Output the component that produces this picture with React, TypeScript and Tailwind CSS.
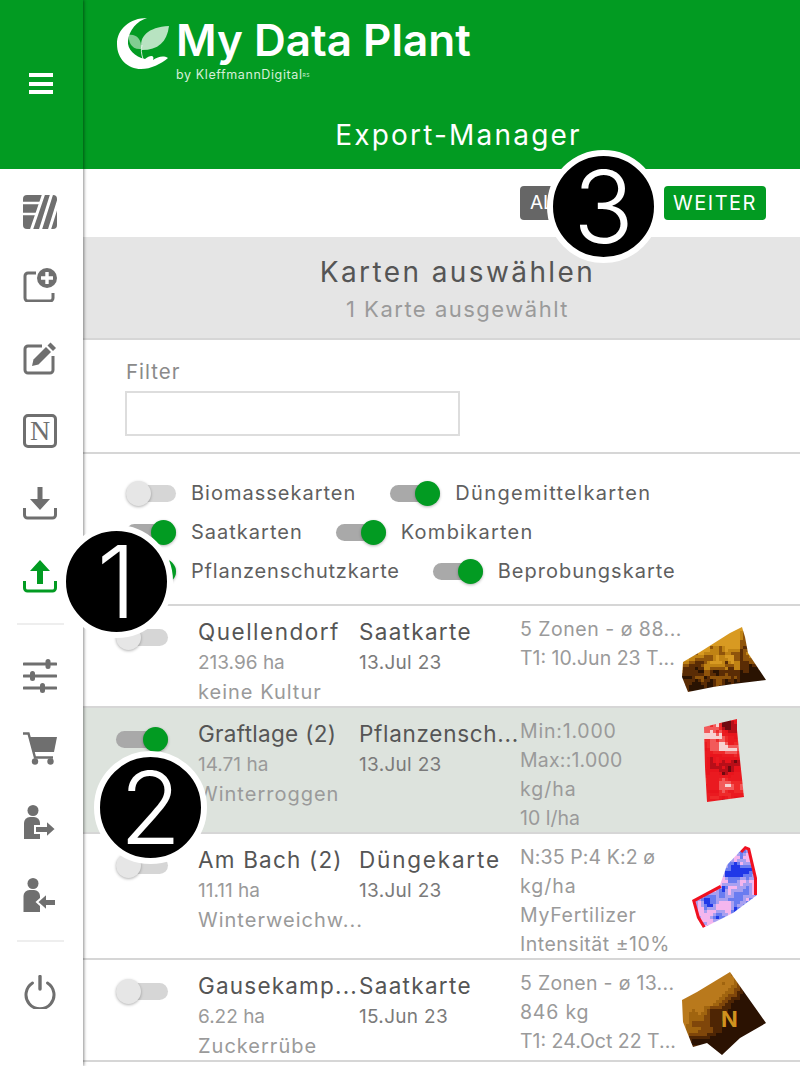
import React from "react";

const G = "#6f6f6f";

function noise(seed: number) {
  const h = (x: number, y: number) => {
    const s = Math.sin(x * 127.1 + y * 311.7 + seed * 74.7) * 43758.5453;
    return s - Math.floor(s);
  };
  const sm = (t: number) => t * t * (3 - 2 * t);
  return (x: number, y: number) => {
    const xi = Math.floor(x), yi = Math.floor(y);
    const u = sm(x - xi), v = sm(y - yi);
    const a = h(xi, yi), b = h(xi + 1, yi), c = h(xi, yi + 1), d = h(xi + 1, yi + 1);
    return a + (b - a) * u + (c - a) * v + (a - b - c + d) * u * v;
  };
}

type MapProps = {
  id: string;
  poly: string;
  seed: number;
  palette: string[];
  field: (x: number, y: number, n: (x: number, y: number) => number) => number;
  rim?: string[];
  children?: React.ReactNode;
};

function FieldMap({ id, poly, seed, palette, field, rim, children }: MapProps) {
  const n = noise(seed);
  const cells: React.ReactNode[] = [];
  for (let y = 0; y < 86; y += 3) {
    for (let x = 0; x < 86; x += 3) {
      const v = Math.max(0, Math.min(0.999, field(x, y, n)));
      cells.push(<rect key={x + "-" + y} x={x} y={y} width={3} height={3} shapeRendering="crispEdges" fill={palette[Math.floor(v * palette.length)]} />);
    }
  }
  return (
    <svg width="86" height="86" viewBox="0 0 86 86" className="shrink-0 mt-[10px]">
      <clipPath id={id}><polygon points={poly} /></clipPath>
      <g clipPath={`url(#${id})`}>
        <g className="blur-[0.5px]">
          {cells}
          {rim && rim.map((r) => <polyline key={r} points={r} fill="none" stroke="#f01020" strokeWidth="6" />)}
        </g>
      </g>
      {children}
    </svg>
  );
}

const Map1 = () => (
  <FieldMap id="m1" seed={3} poly="3,46 20,36 50,17 62,11 65,21 68,37 86,64 53,68 33,71 8,76 2,61"
    palette={["#d89a22", "#c08314", "#8f540b", "#5a2c05", "#2a1302"]}
    field={(x, y, n) => (y - 25) / 48 + (n(x / 5, y / 5) - 0.5) * 0.7 + (x > 58 ? 0.35 : 0)} />
);
const Map2 = () => (
  <FieldMap id="m2" seed={8} poly="24,9 40,5 57,1 57,12 60,42 64,79 27,84 25,49"
    palette={["#f7d2d2", "#f25a5a", "#ee2a2a", "#ea1a20", "#e8141c", "#b80e18", "#6e0a10"]}
    field={(x, y, n) => 0.52 + 0.28 * Math.sin(y / 6.5 + 0.6) * (x > 38 ? 1.1 : 0.5) + (n(x / 6, y / 6) - 0.5) * 0.45 - (y < 20 && x < 40 ? 0.45 : 0)} />
);
const Map3 = () => (
  <FieldMap id="m3" seed={5} poly="12,56 40,41 47,21 65,2 70,4 77,34 77,51 53,69 23,84 17,74"
    rim={["23,84 17,74 12,56 40,41", "60,7 65,2 70,4 77,34 77,51"]}
    palette={["#f4b6ee", "#f4b6ee", "#a8a0f0", "#6a7cf0", "#2038e8"]}
    field={(x, y, n) => 0.5 + (n(x / 6, y / 6) - 0.5) * 0.95 + (x > 42 && x < 58 && y > 15 && y < 32 ? 0.3 : 0)} />
);
const Map4 = () => (
  <FieldMap id="m4" seed={11} poly="2,30 17,22 50,2 57,12 86,53 60,68 42,85 27,73 13,77 3,52"
    palette={["#b9791c", "#a0640f", "#7f460a", "#4e2504", "#2b1202"]}
    field={(x, y, n) => (x + y - 48) / 55 + (n(x / 10, y / 10) - 0.5) * 0.5}>
    <text x="41" y="57" fill="#d0921f" fontFamily="Inter, sans-serif" fontWeight="700" fontSize="22">N</text>
  </FieldMap>
);

const Tray = ({ color }: { color: string }) => (
  <path d="M1.5 21V28a3 3 0 0 0 3 3H29.5a3 3 0 0 0 3-3V21" fill="none" stroke={color} strokeWidth="3" />
);

const icons: React.ReactNode[] = [
  <svg key="a" width="34" height="34" viewBox="0 0 34 34">
    <clipPath id="fr"><rect width="34" height="34" rx="4" /></clipPath>
    <g clipPath="url(#fr)">
      <rect width="34" height="34" fill={G} />
      <path d="M0 8H18M0 19H14" stroke="#fff" strokeWidth="2.4" />
      <path d="M21 -2L8 36M29 -2L17 36M36 4L26 36" stroke="#fff" strokeWidth="3" />
    </g>
  </svg>,
  <svg key="b" width="34" height="34" viewBox="0 0 34 34">
    <path d="M13 5H5a3 3 0 0 0-3 3V30a3 3 0 0 0 3 3H27a3 3 0 0 0 3-3V25" fill="none" stroke={G} strokeWidth="3" />
    <circle cx="24" cy="10" r="10" fill={G} />
    <path d="M24 4V16M18 10H30" stroke="#fff" strokeWidth="3.4" />
  </svg>,
  <svg key="c" width="34" height="34" viewBox="0 0 34 34">
    <path d="M19 5H5a3 3 0 0 0-3 3V29a3 3 0 0 0 3 3H27a3 3 0 0 0 3-3V15" fill="none" stroke={G} strokeWidth="3" />
    <path d="M9 25L10.5 18.5L23 6L28 11L15.5 23.5Z" fill={G} />
    <path d="M24.5 4.5L27.5 1.5L33 7L30 10Z" fill={G} />
  </svg>,
  <svg key="d" width="34" height="34" viewBox="0 0 34 34">
    <rect x="1.5" y="1.5" width="31" height="31" rx="3.5" fill="none" stroke={G} strokeWidth="3" />
    <text x="17" y="26" textAnchor="middle" fill={G} fontFamily="Liberation Serif, serif" fontWeight="400" fontSize="28">N</text>
  </svg>,
  <svg key="e" width="34" height="34" viewBox="0 0 34 34">
    <path d="M14.5 0H19.5V12H27L17 23L7 12H14.5Z" fill={G} />
    <Tray color={G} />
  </svg>,
  <svg key="f" width="34" height="34" viewBox="0 0 34 34">
    <path d="M17 0L27 11H20V24H14V11H7Z" fill="#029b22" />
    <Tray color="#029b22" />
  </svg>,
];

const icons2: React.ReactNode[] = [
  <svg key="g" width="34" height="34" viewBox="0 0 34 34">
    <path d="M1 5H33M1 17H33M1 29H33" stroke={G} strokeWidth="3" strokeLinecap="round" />
    <rect x="22.5" y="0" width="5" height="10" rx="2.5" fill={G} />
    <rect x="7" y="12" width="5" height="10" rx="2.5" fill={G} />
    <rect x="17" y="24" width="5" height="10" rx="2.5" fill={G} />
  </svg>,
  <svg key="h" width="34" height="34" viewBox="0 0 34 34">
    <path d="M0 1.5H5.5L12 25.5H30" fill="none" stroke={G} strokeWidth="2.4" />
    <path d="M6 5H34L31 20H10Z" fill={G} />
    <circle cx="12" cy="29.5" r="3.2" fill={G} />
    <circle cx="27.5" cy="29.5" r="3.2" fill={G} />
  </svg>,
  <svg key="i" width="34" height="34" viewBox="0 0 34 34">
    <circle cx="10" cy="5.5" r="5.5" fill={G} />
    <path d="M1 34V18a6 6 0 0 1 6-6H11a6 6 0 0 1 6 6V34Z" fill={G} />
    <path d="M12 21H23V15L33 24L23 33V28H12Z" fill={G} stroke="#fff" strokeWidth="2" />
  </svg>,
  <svg key="j" width="34" height="34" viewBox="0 0 34 34">
    <circle cx="10" cy="5.5" r="5.5" fill={G} />
    <path d="M0.5 34V18a6 6 0 0 1 6-6H11a6 6 0 0 1 6 6V34Z" fill={G} />
    <path d="M33 21H24V15L14 24L24 33V28H33Z" fill={G} stroke="#fff" strokeWidth="2" />
  </svg>,
];

const NavItem = ({ children }: { children: React.ReactNode }) => (
  <div className="h-[73px] pr-[3px] flex items-center justify-center">{children}</div>
);

function Toggle({ on, row }: { on?: boolean; row?: boolean }) {
  return (
    <div className={`relative ${row ? "w-[52px]" : "w-[50px]"} h-[17px] rounded-full shrink-0 ${on ? "bg-[#a9a9a9]" : "bg-[#d6d6d6]"}`}>
      <div className={`absolute top-[-4px] w-[25px] h-[25px] rounded-full shadow-[0_1px_3px_rgba(0,0,0,0.3)] ${on ? "right-0 bg-[#029b22]" : "left-0 bg-[#e6e6e6]"}`} />
    </div>
  );
}

const Chip = ({ on, label, tr }: { on?: boolean; label: string; tr: string }) => (
  <div className="flex items-center gap-[15px]">
    <Toggle on={on} />
    <span className={`text-[#5f5f5f] text-[20px] leading-[24px] whitespace-nowrap ${tr}`}>{label}</span>
  </div>
);

const NAME = "text-[22.5px] leading-[30px] text-[#555555]";
const SUB = "text-[20px] tracking-[1px] leading-[30px] text-[#9a9a9a]";
const NUM = "text-[19px] leading-[30px] text-[#9a9a9a] mt-[1px]";
const DET = "text-[19.5px] leading-[29px] text-[#9a9a9a]";

type RowP = {
  name: React.ReactNode; kind: React.ReactNode; a: string; date: string; b: React.ReactNode;
  details: React.ReactNode; on?: boolean; sel?: boolean; tall?: boolean; map: React.ReactNode;
};

const Row = ({ name, kind, a, date, b, details, on, sel, tall, map }: RowP) => (
  <div className={`flex border-b-2 border-[#d6d6d6] pl-[33px] shrink-0 ${tall ? "h-[126px]" : "h-[102px]"} ${sel ? "bg-[#dde3dd]" : "bg-white"}`}>
    <div className="w-[82px] shrink-0 pt-[23px]"><Toggle row on={on} /></div>
    <div className="w-[161px] shrink-0 pt-[11px] whitespace-nowrap">
      {name}
      <div className={NUM}>{a}</div>
      <div className="h-[28px] flex items-center">{b}</div>
    </div>
    <div className="w-[161px] shrink-0 pt-[11px] whitespace-nowrap">
      {kind}
      <div className="text-[19px] tracking-[0.3px] leading-[30px] text-[#7a7a7a] mt-[1px]">{date}</div>
    </div>
    <div className="w-[160px] shrink-0 pt-[9px] whitespace-nowrap">{details}</div>
    {map}
  </div>
);

const Badge = ({ n, className }: { n: string; className: string }) => (
  <div className={`absolute w-[113px] h-[113px] rounded-full bg-black border-[6px] border-white flex items-center justify-center text-white text-[100px] leading-none font-[350] z-20 ${className}`}>
    {n}
  </div>
);

export default function App() {
  return (
    <div className="relative flex w-[800px] h-[1066px] overflow-hidden bg-white font-[Inter,sans-serif]">
      <aside className="relative z-10 w-[83px] shrink-0 flex flex-col bg-white shadow-[1px_0_3px_rgba(0,0,0,0.45)]">
        <div className="h-[169px] bg-[#029b22] pr-[2px] pb-[2px] flex flex-col items-center justify-center gap-[4.5px]">
          <div className="w-[24px] h-[4px] bg-white" />
          <div className="w-[24px] h-[4px] bg-white" />
          <div className="w-[24px] h-[4px] bg-white" />
        </div>
        <div className="pt-[6px]">
          {icons.map((ic, i) => <NavItem key={i}>{ic}</NavItem>)}
          <div className="h-[2px] ml-[17px] mr-[19px] bg-[#eeeeee] mt-[10px] mb-[14px]" />
          {icons2.map((ic, i) => <NavItem key={i}>{ic}</NavItem>)}
          <div className="h-[2px] ml-[17px] mr-[19px] bg-[#eeeeee] mt-[9px] mb-[13px]" />
          <NavItem>
            <svg width="34" height="34" viewBox="0 0 34 34">
              <path d="M9.5 8A14 14 0 1 0 24.5 8" fill="none" stroke={G} strokeWidth="3" strokeLinecap="round" />
              <path d="M17 1.5V14" stroke={G} strokeWidth="3.4" strokeLinecap="round" />
            </svg>
          </NavItem>
        </div>
      </aside>

      <main className="flex-1 min-w-0 flex flex-col">
        <header className="h-[169px] bg-[#029b22] pl-[34px] text-white shrink-0">
          <div className="flex pt-[17px] h-[118px]">
            <svg width="54" height="54" viewBox="0 0 54 54" className="shrink-0">
              <path d="M30 1C13 1 0 12 0 27C0 42 11 52 24 52C34 52 44 47 51 41C46 38 41 40 36 43C38 38 33 38 28 42C18 40 10 32 11 24C12 13 20 4 30 1Z" fill="#fff" />
              <path d="M25 33C21 20 31 10 52 9C50 25 41 33 25 33Z" fill="#fff" fillOpacity="0.72" />
              <path d="M24 32C14 33 11 24 12 18C19 17 25 22 24 32Z" fill="#fff" fillOpacity="0.5" />
              <path d="M26 42C24 36 24 32 25 28" stroke="#fff" strokeOpacity="0.8" fill="none" />
            </svg>
            <div className="pl-[5px]">
              <div className="text-[44px] font-semibold leading-[46px] whitespace-nowrap">My Data Plant</div>
              <div className="text-[12.5px] leading-[16px] text-[#d6efd9] tracking-[0.6px] mt-[4px] whitespace-nowrap">
                by KleffmannDigital<sup className="text-[5px]">RS</sup>
              </div>
            </div>
          </div>
          <div className="text-center text-[28px] tracking-[2.2px] leading-[34px]">Export-Manager</div>
        </header>

        <div className="h-[68px] flex items-center justify-end pr-[34px] gap-[10px] shrink-0">
          <div className="w-[134px] h-[34px] rounded-[4px] bg-[#666666] text-white text-[19px] pl-[10px] leading-[34px]">ALLE</div>
          <div className="w-[102px] h-[34px] rounded-[4px] bg-[#029b22] text-white text-[20px] tracking-[1.5px] text-center leading-[34px]">WEITER</div>
        </div>

        <div className="h-[103px] bg-[#e5e5e5] border-b-2 border-[#d6d6d6] pl-[32px] text-center shrink-0">
          <div className="pt-[19px] text-[28px] tracking-[2.4px] leading-[32px] text-[#555555]">Karten auswählen</div>
          <div className="pt-[7px] text-[22px] tracking-[1.5px] leading-[28px] text-[#9a9a9a]">1 Karte ausgewählt</div>
        </div>

        <div className="h-[114px] border-b-2 border-[#d6d6d6] pl-[42px] shrink-0">
          <div className="pl-[1px] pt-[19px] text-[20.5px] tracking-[1px] leading-[26px] text-[#8a8a8a]">Filter</div>
          <div className="mt-[6px] w-[335px] h-[45px] border-2 border-[#dddddd]" />
        </div>

        <div className="h-[152px] border-b-2 border-[#d6d6d6] pl-[43px] pt-[27px] flex flex-col gap-[15px] shrink-0">
          <div className="flex gap-x-[34px]"><Chip tr="tracking-[1px]" label="Biomassekarten" /><Chip on tr="tracking-[1.35px]" label="Düngemittelkarten" /></div>
          <div className="flex gap-x-[33px]"><Chip on tr="tracking-[1px]" label="Saatkarten" /><Chip on tr="tracking-[1.25px]" label="Kombikarten" /></div>
          <div className="flex gap-x-[33px]"><Chip on tr="tracking-[0.8px]" label="Pflanzenschutzkarte" /><Chip on tr="tracking-[1px]" label="Beprobungskarte" /></div>
        </div>

        <Row
          name={<div className={`${NAME} tracking-[1.5px]`}>Quellendorf</div>}
          a="213.96 ha"
          b={<div className={SUB}>keine Kultur</div>}
          kind={<div className={`${NAME} tracking-[1.3px]`}>Saatkarte</div>}
          date="13.Jul 23"
          details={<>
            <div className={`${DET} tracking-[0.5px]`}>5 Zonen - ø 88...</div>
            <div className={DET}>T1: 10.Jun 23 T...</div>
          </>}
          map={<Map1 />}
        />
        <Row
          sel tall on
          name={<div className={`${NAME} tracking-[0.3px]`}>Graftlage (2)</div>}
          a="14.71 ha"
          b={<div className={SUB}>Winterroggen</div>}
          kind={<div className={`${NAME} tracking-[0.7px]`}>Pflanzensch...</div>}
          date="13.Jul 23"
          details={<>
            <div className={`${DET} tracking-[0.8px]`}>Min:1.000</div>
            <div className={`${DET} tracking-[0.2px]`}>Max::1.000</div>
            <div className={`${DET} tracking-[1px]`}>kg/ha</div>
            <div className={DET}>10 l/ha</div>
          </>}
          map={<Map2 />}
        />
        <Row
          tall
          name={<div className={`${NAME} tracking-[1.2px]`}>Am Bach (2)</div>}
          a="11.11 ha"
          b={<div className={SUB}>Winterweichw...</div>}
          kind={<div className={`${NAME} tracking-[1.8px]`}>Düngekarte</div>}
          date="13.Jul 23"
          details={<>
            <div className={`${DET} tracking-[0.1px]`}>N:35 P:4 K:2 ø</div>
            <div className={`${DET} tracking-[1px]`}>kg/ha</div>
            <div className={`${DET} tracking-[0.7px]`}>MyFertilizer</div>
            <div className={`${DET} tracking-[0.5px]`}>Intensität ±10%</div>
          </>}
          map={<Map3 />}
        />
        <Row
          name={<div className={`${NAME} tracking-[1.2px]`}>Gausekamp...</div>}
          a="6.22 ha"
          b={<div className={SUB}>Zuckerrübe</div>}
          kind={<div className={`${NAME} tracking-[1.3px]`}>Saatkarte</div>}
          date="15.Jun 23"
          details={<>
            <div className={`${DET} tracking-[0.3px]`}>5 Zonen - ø 13...</div>
            <div className={`${DET} tracking-[0.8px]`}>846 kg</div>
            <div className={DET}>T1: 24.Oct 22 T...</div>
          </>}
          map={<Map4 />}
        />
      </main>

      <Badge n="1" className="left-[60px] top-[525px]" />
      <Badge n="2" className="left-[94px] top-[751px]" />
      <Badge n="3" className="left-[547px] top-[150px]" />
    </div>
  );
}
